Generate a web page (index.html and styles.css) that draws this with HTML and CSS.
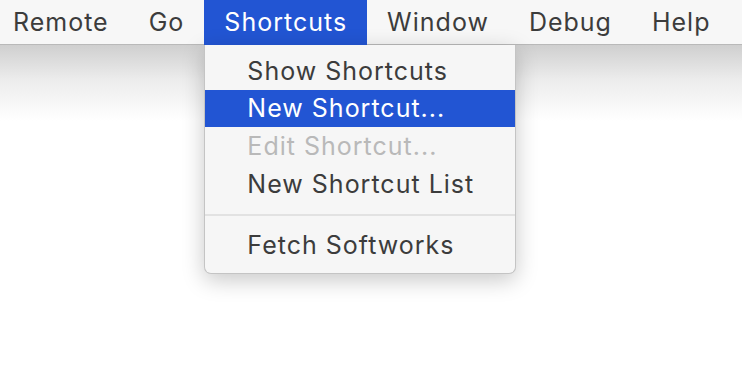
FILE: index.html
```html
<!DOCTYPE html>
<html lang="en">
<head>
    <meta charset="UTF-8">
    <title>Shortcuts menu</title>
    <link rel="stylesheet" href="styles.css">
</head>
<body>

    <!-- Menu bar -->
    <div class="menubar">
        <div class="menu-title">Remote</div>
        <div class="menu-title">Go</div>
        <div class="menu-title open">
            Shortcuts
            <!-- Dropdown for the open menu -->
            <div class="dropdown">
                <div class="item">Show Shortcuts</div>
                <div class="item active">New Shortcut...</div>
                <div class="item disabled">Edit Shortcut...</div>
                <div class="item">New Shortcut List</div>
                <div class="separator"></div>
                <div class="item">Fetch Softworks</div>
            </div>
        </div>
        <div class="menu-title">Window</div>
        <div class="menu-title">Debug</div>
        <div class="menu-title">Help</div>
    </div>

    <div class="desktop"></div>

</body>
</html>
```

FILE: styles.css
```css
body {
    margin: 0;
    padding: 0;
    background-color: #ffffff;
    font-family: 'Inter', 'Liberation Sans', sans-serif;
    color: #3c3c3c;
}

/* Top menu bar */
.menubar {
    display: flex;
    height: 44px;
    margin-left: -7px;
    background-color: #f7f7f7;
    border-bottom: 1px solid #b9b9b9;
    position: relative;
    z-index: 2;
}

.menu-title {
    padding: 0 20px;
    font-size: 25px;
    letter-spacing: 1px;
    line-height: 44px;
    position: relative;
    white-space: nowrap;
}

.menu-title.open {
    background-color: #2255d3;
    color: #ffffff;
    height: 45px;
}

/* Dropdown menu */
.dropdown {
    position: absolute;
    top: 45px;
    left: 0;
    width: 310px;
    padding: 7px 0 9px;
    background-color: #f6f6f6;
    border: 1px solid #c4c4c4;
    border-top: none;
    border-radius: 0 0 7px 7px;
    box-shadow: 0 6px 22px rgba(0, 0, 0, 0.22);
    color: #3c3c3c;
}

.item {
    height: 38px;
    line-height: 38px;
    padding-left: 42px;
    font-size: 25px;
    letter-spacing: 1px;
}

.item.active {
    background-color: #2255d3;
    color: #ffffff;
    height: 37px;
    line-height: 36px;
}

.item.disabled {
    color: #b9b9b9;
}

.separator {
    height: 2px;
    margin: 11px 0 10px;
    background-color: #e2e2e2;
}

/* Shadow the menu bar casts on the desktop */
.desktop {
    height: 345px;
    background: linear-gradient(#cfcfcf, #ececec 10%, #ffffff 22%);
}
```
